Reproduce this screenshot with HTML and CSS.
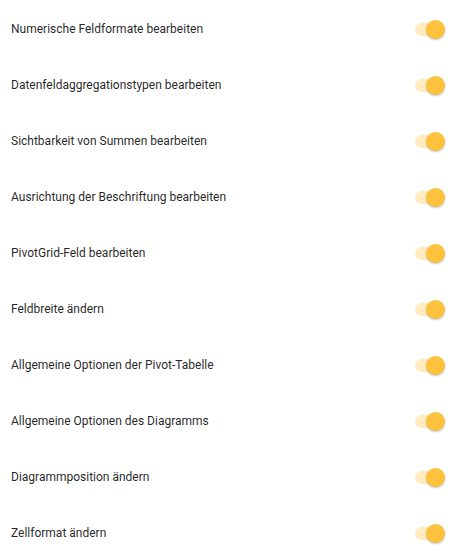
FILE: index.html
```html
<!DOCTYPE html>
<html lang="de">
<head>
<meta charset="utf-8">
<link rel="stylesheet" href="styles.css">
</head>
<body>
<ul class="list">
  <li class="row"><span class="label">Numerische Feldformate bearbeiten</span><span class="toggle"><span class="track"></span><span class="knob"></span></span></li>
  <li class="row"><span class="label">Datenfeldaggregationstypen bearbeiten</span><span class="toggle"><span class="track"></span><span class="knob"></span></span></li>
  <li class="row"><span class="label">Sichtbarkeit von Summen bearbeiten</span><span class="toggle"><span class="track"></span><span class="knob"></span></span></li>
  <li class="row"><span class="label">Ausrichtung der Beschriftung bearbeiten</span><span class="toggle"><span class="track"></span><span class="knob"></span></span></li>
  <li class="row"><span class="label">PivotGrid-Feld bearbeiten</span><span class="toggle"><span class="track"></span><span class="knob"></span></span></li>
  <li class="row"><span class="label">Feldbreite ändern</span><span class="toggle"><span class="track"></span><span class="knob"></span></span></li>
  <li class="row"><span class="label">Allgemeine Optionen der Pivot-Tabelle</span><span class="toggle"><span class="track"></span><span class="knob"></span></span></li>
  <li class="row"><span class="label">Allgemeine Optionen des Diagramms</span><span class="toggle"><span class="track"></span><span class="knob"></span></span></li>
  <li class="row"><span class="label">Diagrammposition ändern</span><span class="toggle"><span class="track"></span><span class="knob"></span></span></li>
  <li class="row"><span class="label">Zellformat ändern</span><span class="toggle"><span class="track"></span><span class="knob"></span></span></li>
</ul>
</body>
</html>
```
FILE: styles.css
```css
html, body {
  margin: 0;
  padding: 0;
  background: #ffffff;
}
body {
  font-family: Roboto, "Liberation Sans", sans-serif;
  font-size: 12px;
  color: rgba(0, 0, 0, 0.87);
}
.list {
  list-style: none;
  margin: 0;
  padding: 0;
}
.row {
  display: flex;
  align-items: center;
  justify-content: space-between;
  height: 56px;
  padding: 0 22px 0 11px;
}
.label {
  padding-top: 2px;
}
.toggle {
  position: relative;
  width: 30px;
  height: 19px;
  margin-top: 2px;
  display: flex;
  align-items: center;
}
.track {
  width: 29px;
  height: 13px;
  border-radius: 7px;
  background: #feecc1;
}
.knob {
  position: absolute;
  right: 0;
  top: 0;
  width: 19px;
  height: 19px;
  border-radius: 50%;
  background: #fec23c;
  box-shadow: 0 1px 2px rgba(0, 0, 0, 0.25);
}
```
